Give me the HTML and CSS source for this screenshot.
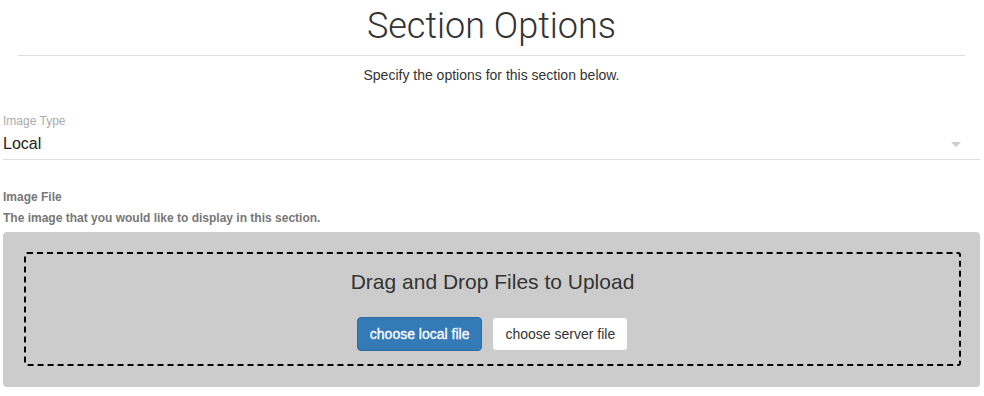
FILE: index.html
```html
<!DOCTYPE html>
<html lang="en">
<head>
    <meta charset="UTF-8">
    <meta name="viewport" content="width=device-width, initial-scale=1.0">
    <title>Section Options</title>
    <link rel="stylesheet" href="styles.css">
</head>
<body>
    <div class="container">
        <div class="page-header">
            <h1>Section Options</h1>
        </div>
        <p class="lead">Specify the options for this section below.</p>

        <!-- Image type select -->
        <div class="field">
            <label class="field-label">Image Type</label>
            <div class="select">
                <span>Local</span>
                <span class="caret"></span>
            </div>
        </div>

        <!-- Image file upload -->
        <div class="field file-field">
            <label class="file-label">Image File</label>
            <p class="help">The image that you would like to display in this section.</p>
            <div class="upload-box">
                <div class="drop-zone">
                    <h3>Drag and Drop Files to Upload</h3>
                    <div class="buttons">
                        <button class="btn btn-primary">choose local file</button>
                        <button class="btn btn-default">choose server file</button>
                    </div>
                </div>
            </div>
        </div>
    </div>
</body>
</html>
```

FILE: styles.css
```css
body {
    font-family: "Liberation Sans", Arial, sans-serif;
    margin: 0;
    padding: 0;
    color: #333;
    background: #fff;
}

.container {
    padding: 0 4px 0 3px;
}

.page-header {
    margin: 0 15px;
    border-bottom: 1px solid #ddd;
    text-align: center;
}

.page-header h1 {
    font-family: Roboto, "Liberation Sans", sans-serif;
    font-weight: 300;
    font-size: 36px;
    margin: 0;
    padding: 6px 0 9px;
    line-height: 40px;
    color: #333;
}

.lead {
    text-align: center;
    font-size: 14px;
    margin: 9px 0 0;
    line-height: 20px;
}

.field {
    margin-top: 29px;
}

.field-label {
    display: block;
    font-size: 12px;
    color: #aaa;
    line-height: 15px;
}

.select {
    display: flex;
    justify-content: space-between;
    align-items: center;
    height: 30px;
    border-bottom: 1px solid #ddd;
    font-size: 16px;
    color: #222;
}

.select .caret {
    width: 0;
    height: 0;
    border-left: 5px solid transparent;
    border-right: 5px solid transparent;
    border-top: 5px solid #ccc;
    margin-right: 19px;
}

.file-field {
    margin-top: 30px;
}

.file-label {
    display: block;
    font-size: 12px;
    font-weight: bold;
    color: #777;
    line-height: 15px;
}

.help {
    font-size: 12px;
    font-weight: bold;
    color: #777;
    margin: 6px 0 0;
    line-height: 15px;
}

.upload-box {
    background-color: #ccc;
    border-radius: 4px;
    padding: 20px 19px 21px 21px;
    margin-top: 6px;
}

.drop-zone {
    border: 2px dashed #000;
    border-radius: 3px;
    text-align: center;
    padding: 16px 0 13px;
}

.drop-zone h3 {
    font-family: "Liberation Sans", Arial, sans-serif;
    font-weight: normal;
    font-size: 21px;
    margin: 0;
    line-height: 24px;
    color: #333;
}

.buttons {
    display: flex;
    justify-content: center;
    gap: 10px;
    margin-top: 23px;
}

.btn {
    font-family: "Liberation Sans", Arial, sans-serif;
    font-size: 14px;
    line-height: 20px;
    padding: 6px 12px;
    border-radius: 4px;
    border: 1px solid transparent;
    cursor: pointer;
}

.btn-primary {
    background-color: #337ab7;
    border-color: #2e6da4;
    color: #fff;
    -webkit-text-stroke: 0.3px #fff;
}

.btn-default {
    background-color: #fff;
    border-color: #ccc;
    color: #333;
}
```
